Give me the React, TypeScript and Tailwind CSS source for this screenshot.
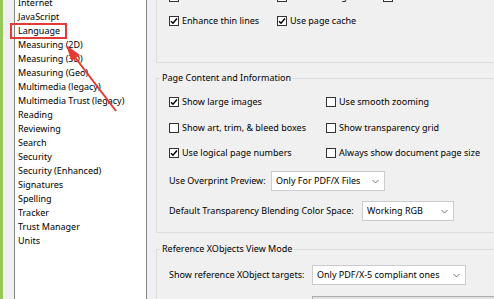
import React from 'react';

const CATEGORIES = [
  'Internet',
  'JavaScript',
  'Language',
  'Measuring (2D)',
  'Measuring (3D)',
  'Measuring (Geo)',
  'Multimedia (legacy)',
  'Multimedia Trust (legacy)',
  'Reading',
  'Reviewing',
  'Search',
  'Security',
  'Security (Enhanced)',
  'Signatures',
  'Spelling',
  'Tracker',
  'Trust Manager',
  'Units',
];

function Check({ checked, label }: { checked?: boolean; label: string }) {
  return (
    <label className="flex items-center gap-[3px] h-[16px] whitespace-nowrap">
      <span className="w-[10px] h-[10px] shrink-0 border border-[#333333] bg-white flex items-center justify-center">
        {checked && (
          <svg width="8" height="8" viewBox="0 0 8 8">
            <path d="M1 4.2 L3 6.2 L7 1.6" fill="none" stroke="#000" strokeWidth="1.5" />
          </svg>
        )}
      </span>
      <span>{label}</span>
    </label>
  );
}

function Select({ value, className }: { value: string; className: string }) {
  return (
    <div className={`h-[20px] shrink-0 bg-white border border-[#cccccc] flex items-center pl-[4px] pr-[5px] ${className}`}>
      <span className="flex-1 whitespace-nowrap">{value}</span>
      <svg width="7" height="5" viewBox="0 0 7 5" className="shrink-0">
        <path d="M0.5 1 L3.5 4 L6.5 1" fill="none" stroke="#707070" strokeWidth="1" />
      </svg>
    </div>
  );
}

export default function App() {
  return (
    <div className="relative w-[494px] h-[299px] overflow-hidden bg-[#f0f0f0] flex font-['Noto_Sans',sans-serif] text-[9px] text-black leading-[14px]">
      {/* window edge */}
      <div className="w-[3px] shrink-0 bg-[#97c95c]" />

      {/* category list */}
      <div className="ml-[11px] -mt-[10px] w-[133px] h-[330px] shrink-0 border border-[#828790] bg-white pt-[5px] pl-[3px]">
        {CATEGORIES.map(c => (
          <div key={c} className="h-[14px] whitespace-nowrap">{c}</div>
        ))}
      </div>

      {/* preference groups */}
      <div className="ml-[9px] w-[345px] shrink-0 flex flex-col">
        {/* Rendering (scrolled) */}
        <div className="-mt-[40px] h-[103px] shrink-0 border border-[#dcdcdc] pt-[28px] pl-[12px] flex flex-col gap-[8px]">
          <div className="flex">
            <div className="w-[108px]"><Check label="Smooth line art" /></div>
            <div className="w-[106px]"><Check label="Smooth images" /></div>
            <div><Check label="Use local fonts" /></div>
          </div>
          <div className="flex">
            <div className="w-[108px]"><Check checked label="Enhance thin lines" /></div>
            <div><Check checked label="Use page cache" /></div>
          </div>
        </div>

        {/* Page Content and Information */}
        <fieldset className="mt-[8px] shrink-0 border border-[#dcdcdc] pl-[12px] pt-[9px] pb-[11px]">
          <legend className="-ml-[9px] px-[2px] leading-[14px]">Page Content and Information</legend>
          <div className="flex flex-col">
            <div className="flex">
              <div className="w-[157px]"><Check checked label="Show large images" /></div>
              <Check label="Use smooth zooming" />
            </div>
            <div className="flex mt-[10px]">
              <div className="w-[157px]"><Check label="Show art, trim, & bleed boxes" /></div>
              <Check label="Show transparency grid" />
            </div>
            <div className="flex mt-[9px]">
              <div className="w-[157px]"><Check checked label="Use logical page numbers" /></div>
              <Check label="Always show document page size" />
            </div>
            <div className="flex items-center mt-[10px]">
              <span className="w-[102px] whitespace-nowrap">Use Overprint Preview:</span>
              <Select value="Only For PDF/X Files" className="w-[114px]" />
            </div>
            <div className="flex items-center mt-[10px]">
              <span className="w-[193px] whitespace-nowrap">Default Transparency Blending Color Space:</span>
              <Select value="Working RGB" className="w-[92px]" />
            </div>
          </div>
        </fieldset>

        {/* Reference XObjects View Mode */}
        <fieldset className="mt-[9px] shrink-0 border border-[#dcdcdc] pl-[12px] pt-[9px] pb-[10px]">
          <legend className="-ml-[9px] px-[2px] leading-[14px]">Reference XObjects View Mode</legend>
          <div className="flex items-center">
            <span className="w-[143px] whitespace-nowrap">Show reference XObject targets:</span>
            <Select value="Only PDF/X-5 compliant ones" className="w-[154px]" />
          </div>
          <div className="flex mt-[11px]">
            <div className="ml-[143px] w-[200px] h-[20px] bg-[#e1e1e1] border border-[#adadad]" />
          </div>
        </fieldset>
      </div>

      {/* annotation: highlight and arrow */}
      <div className="absolute left-[10px] top-[23px] w-[57px] h-[16px] border-2 border-[#e53935]" />
      <svg className="absolute left-0 top-0" width="494" height="299" viewBox="0 0 494 299">
        <line x1="116" y1="111" x2="74" y2="56" stroke="#e53935" strokeWidth="2" />
        <polygon points="66,45 80,55 71.5,61" fill="#e53935" />
      </svg>
    </div>
  );
}
